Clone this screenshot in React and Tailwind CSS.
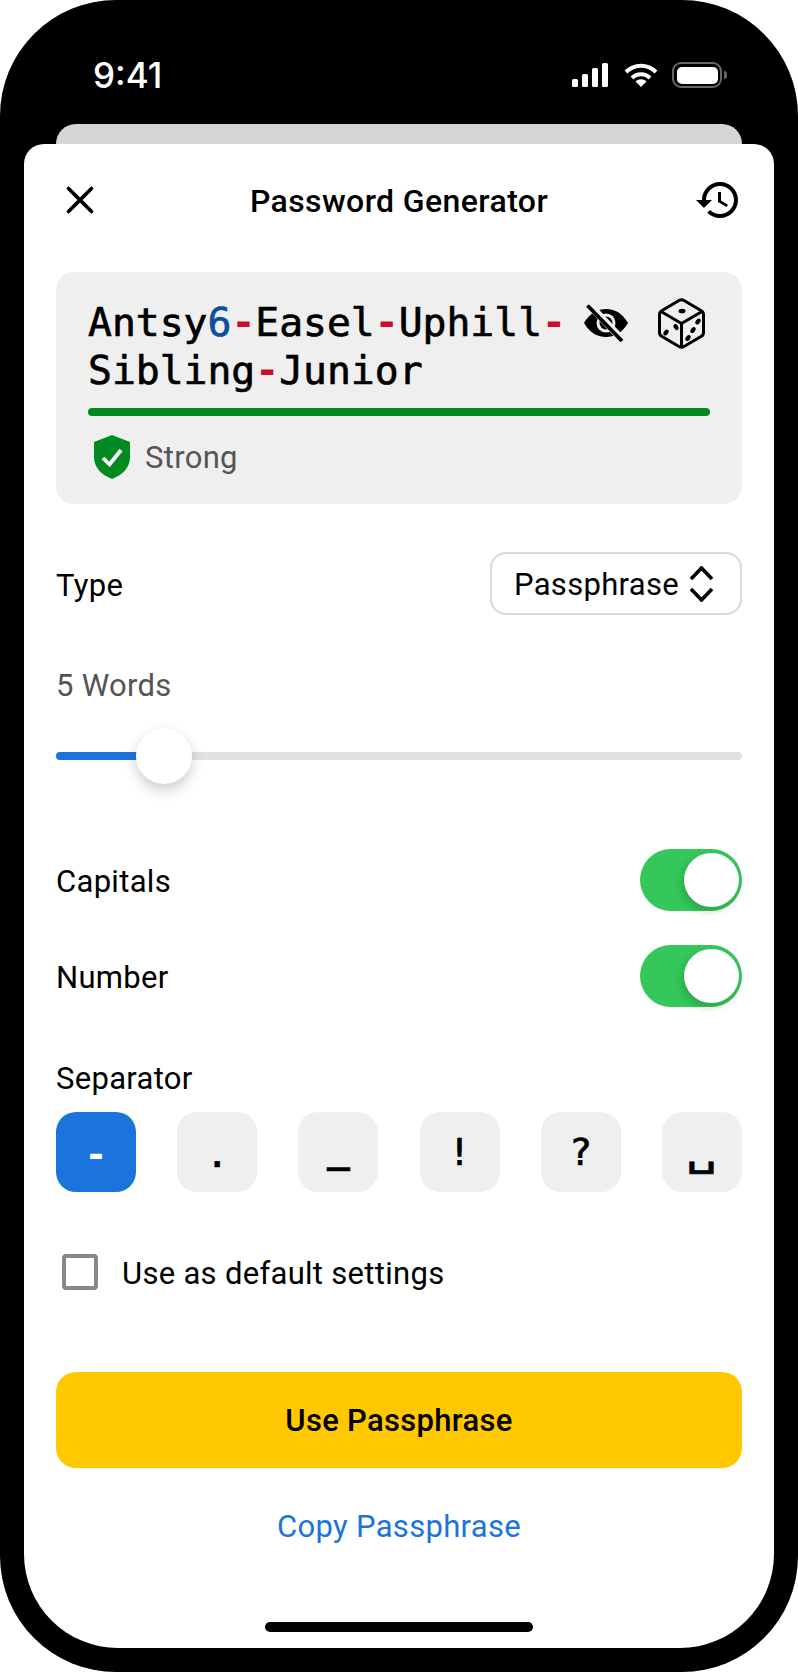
import { X } from "lucide-react";

const SEPARATORS = [
  { ch: ".", cls: "translate-y-[2px]" },
  { ch: "_", cls: "font-bold -translate-y-[3px]" },
  { ch: "!", cls: "" },
  { ch: "?", cls: "" },
  { ch: "␣", cls: "scale-x-[1.35]" },
];

function Toggle() {
  return (
    <div className="relative w-[102px] h-[62px] rounded-full bg-[#34c759]">
      <div className="absolute right-[3px] top-[4px] w-[55px] h-[54px] rounded-full bg-white shadow-[-2px_4px_8px_rgba(0,0,0,0.18)]" />
    </div>
  );
}

function HistoryIcon() {
  return (
    <svg width="42" height="36" viewBox="1 3 21 18" preserveAspectRatio="none" fill="#000">
      <path d="M13 3c-4.97 0-9 4.03-9 9H1l3.89 3.89.07.14L9 12H6c0-3.87 3.13-7 7-7s7 3.13 7 7-3.13 7-7 7c-1.93 0-3.68-.79-4.94-2.06l-1.42 1.42C8.27 19.99 10.51 21 13 21c4.97 0 9-4.03 9-9s-4.03-9-9-9zm-1 5v5l4.28 2.54.72-1.21-3.5-2.08V8H12z" />
    </svg>
  );
}

function EyeOff() {
  return (
    <svg width="44" height="38" viewBox="0 0 44 38" className="mt-[6px]">
      <path d="M0 19C6 8.500 14 5 22 5s16 3.500 22 14c-6 10.500-14 14-22 14S6 29.500 0 19Z" fill="#000" />
      <circle cx="22" cy="19" r="9.500" fill="#efefef" />
      <circle cx="22" cy="19" r="6.500" fill="#000" />
      <path d="M6 1.500 38 35.500" stroke="#efefef" strokeWidth="7.500" />
      <path d="M3.500 1.500 38 37" stroke="#000" strokeWidth="3.800" />
    </svg>
  );
}

function Dice() {
  return (
    <svg width="47" height="51" viewBox="0 0 47 51" fill="none" stroke="#000" strokeWidth="3" strokeLinejoin="round">
      <path d="M21 2.500a5 5 0 0 1 5 0L43 12.500a4.500 4.500 0 0 1 2.500 4V34.500a4.500 4.500 0 0 1-2.500 4L26 48.500a5 5 0 0 1-5 0L4 38.500a4.500 4.500 0 0 1-2.500-4V16.500a4.500 4.500 0 0 1 2.500-4Z" />
      <path d="M3 13.500 23.500 25.500 44 13.500M23.500 25.500V49" />
      <g fill="#000" stroke="none">
        <ellipse cx="24" cy="13" rx="3.500" ry="2.300" />
        <ellipse cx="8" cy="34.500" rx="2.200" ry="3.300" transform="rotate(35 8 34.500)" />
        <ellipse cx="18" cy="29" rx="2.200" ry="3.300" transform="rotate(-30 18 29)" />
        <ellipse cx="40" cy="23.500" rx="2.200" ry="3.300" transform="rotate(35 40 23.500)" />
        <ellipse cx="35" cy="32" rx="2.200" ry="3.300" transform="rotate(35 35 32)" />
        <ellipse cx="30" cy="40" rx="2.200" ry="3.300" transform="rotate(35 30 40)" />
      </g>
    </svg>
  );
}

function StatusIcons() {
  return (
    <div className="flex items-center h-[34px] ml-auto">
      <svg width="36" height="24" viewBox="0 0 36 24" fill="#fff">
        <rect x="0" y="16" width="6" height="8" rx="1.500" />
        <rect x="10" y="11" width="6" height="13" rx="1.500" />
        <rect x="20" y="5" width="6" height="19" rx="1.500" />
        <rect x="30" y="0" width="6" height="24" rx="1.500" />
      </svg>
      <svg width="34" height="24" viewBox="0 0 34 24" fill="none" stroke="#fff" strokeWidth="4" className="ml-[16px]">
        <path d="M2 9C10.500 .5 23.500 .5 32 9" />
        <path d="M8 15C13 10 21 10 26 15" />
        <path d="M17 24 11.500 18.500C14.500 15.500 19.500 15.500 22.500 18.500Z" fill="#fff" stroke="none" />
      </svg>
      <div className="ml-[14px] w-[50px] h-[26px] rounded-[9px] border-[2.5px] border-[#666] p-[2.5px]">
        <div className="w-full h-full rounded-[5px] bg-white" />
      </div>
      <div className="ml-[1.5px] w-[3.5px] h-[8px] rounded-r-[3px] bg-[#666]" />
    </div>
  );
}

function Dash() {
  return <span className="text-[#c8102e] font-bold [-webkit-text-stroke:0px]">-</span>;
}

export default function App() {
  return (
    <div className="w-[798px] h-[1672px] bg-white font-['Roboto',sans-serif] text-[31px] tracking-[0.3px] text-black">
      <div className="w-full h-full rounded-[116px] bg-black flex flex-col overflow-hidden">
        <div className="h-[124px] pt-[58px] pl-[93px] pr-[71px] flex items-start text-white">
          <span className="font-['Inter',sans-serif] font-medium tracking-normal text-[35px] leading-[34px]">9:41</span>
          <StatusIcons />
        </div>
        <div className="h-[20px] mx-[56px] bg-[#d6d6d6] rounded-t-[20px]" />
        <div className="mx-[24px] h-[1504px] bg-white rounded-t-[20px] rounded-b-[94px] px-[32px] flex flex-col">
          <header className="h-[112px] flex items-center justify-between">
            <div className="w-[60px]">
              <X size={46} strokeWidth={1.9} className="ml-[1px]" />
            </div>
            <h1 className="font-medium text-[32px] tracking-[0.4px] pt-[1px]">Password Generator</h1>
            <div className="w-[60px] flex justify-end pr-[4px]">
              <HistoryIcon />
            </div>
          </header>

          <section className="mt-[16px] h-[232px] rounded-[18px] bg-[#efefef] px-[32px] pt-[26px] flex flex-col">
            <div className="flex items-start h-[96px]">
              <div className="w-[496px] font-['DejaVu_Sans_Mono',monospace] tracking-normal text-[39.700px] leading-[48px] [-webkit-text-stroke:0.7px]">
                <div>
                  Antsy<span className="text-[#0b4f9e]">6</span><Dash />Easel<Dash />Uphill<Dash />
                </div>
                <div>
                  Sibling<Dash />Junior
                </div>
              </div>
              <div className="flex items-start">
                <EyeOff />
                <div className="ml-[30px]">
                  <Dice />
                </div>
              </div>
            </div>
            <div className="mt-[14px] h-[8px] rounded-full bg-[#008a20]" />
            <div className="mt-[17px] flex items-center ml-[6px]">
              <svg width="36" height="44" viewBox="0 0 36 44">
                <path d="M18 0 36 7V22C36 33 28 40 18 44 8 40 0 33 0 22V7Z" fill="#008a20" />
                <path d="M9 23 15.500 29.500 27 15" fill="none" stroke="#fff" strokeWidth="3.800" />
              </svg>
              <span className="ml-[15px] pt-[2px] text-[#555]">Strong</span>
            </div>
          </section>

          <div className="mt-[48px] flex items-center justify-between">
            <span className="pt-[5px]">Type</span>
            <div className="w-[252px] h-[63px] rounded-[16px] border-2 border-[#d9d9d9] pl-[22px] flex items-center">
              <span className="pt-[3px]">Passphrase</span>
              <svg width="25" height="36" viewBox="0 0 25 36" fill="none" stroke="#000" strokeWidth="3.600" className="ml-[10px]">
                <path d="M2 13 12.500 2 23 13M2 23 12.500 34 23 23" />
              </svg>
            </div>
          </div>

          <div className="mt-[51px] h-[40px] leading-[40px] text-[#555]">5 Words</div>

          <div className="relative mt-[22px] h-[56px] flex items-center">
            <div className="w-full h-[8px] rounded-full bg-[#e2e2e4]">
              <div className="w-[90px] h-full rounded-l-full bg-[#1b74dc]" />
            </div>
            <div className="absolute left-[80px] top-0 w-[56px] h-[56px] rounded-full bg-white shadow-[0_6px_14px_rgba(0,0,0,0.2)]" />
          </div>

          <div className="mt-[65px] flex items-center justify-between">
            <span className="pt-[5px]">Capitals</span>
            <Toggle />
          </div>
          <div className="mt-[34px] flex items-center justify-between">
            <span className="pt-[4px]">Number</span>
            <Toggle />
          </div>

          <div className="mt-[52px] h-[40px] leading-[40px]">Separator</div>
          <div className="mt-[13px] flex justify-between font-['DejaVu_Sans_Mono',monospace] tracking-normal text-[38px] [-webkit-text-stroke:0.7px]">
            <div className="w-[80px] h-[80px] rounded-[20px] bg-[#1b74dc] text-white flex items-center justify-center">
              <span className="font-bold translate-y-[2px] [-webkit-text-stroke:0px]">-</span>
            </div>
            {SEPARATORS.map((s) => (
              <div key={s.ch} className="w-[80px] h-[80px] rounded-[20px] bg-[#efefef] flex items-center justify-center">
                <span className={s.cls}>{s.ch}</span>
              </div>
            ))}
          </div>

          <div className="mt-[62px] ml-[6px] h-[36px] flex items-center gap-[24px]">
            <div className="w-[36px] h-[36px] rounded-[4px] border-[4px] border-[#888]" />
            <span className="pt-[5px]">Use as default settings</span>
          </div>

          <button className="mt-[82px] h-[96px] shrink-0 rounded-[20px] bg-[#ffc800] font-medium pt-[3px]">Use Passphrase</button>
          <div className="mt-[39px] h-[40px] leading-[40px] text-center text-[#1b74dc]">Copy Passphrase</div>
          <div className="mt-[75px] mx-auto w-[268px] h-[10px] rounded-full bg-black" />
        </div>
      </div>
    </div>
  );
}
